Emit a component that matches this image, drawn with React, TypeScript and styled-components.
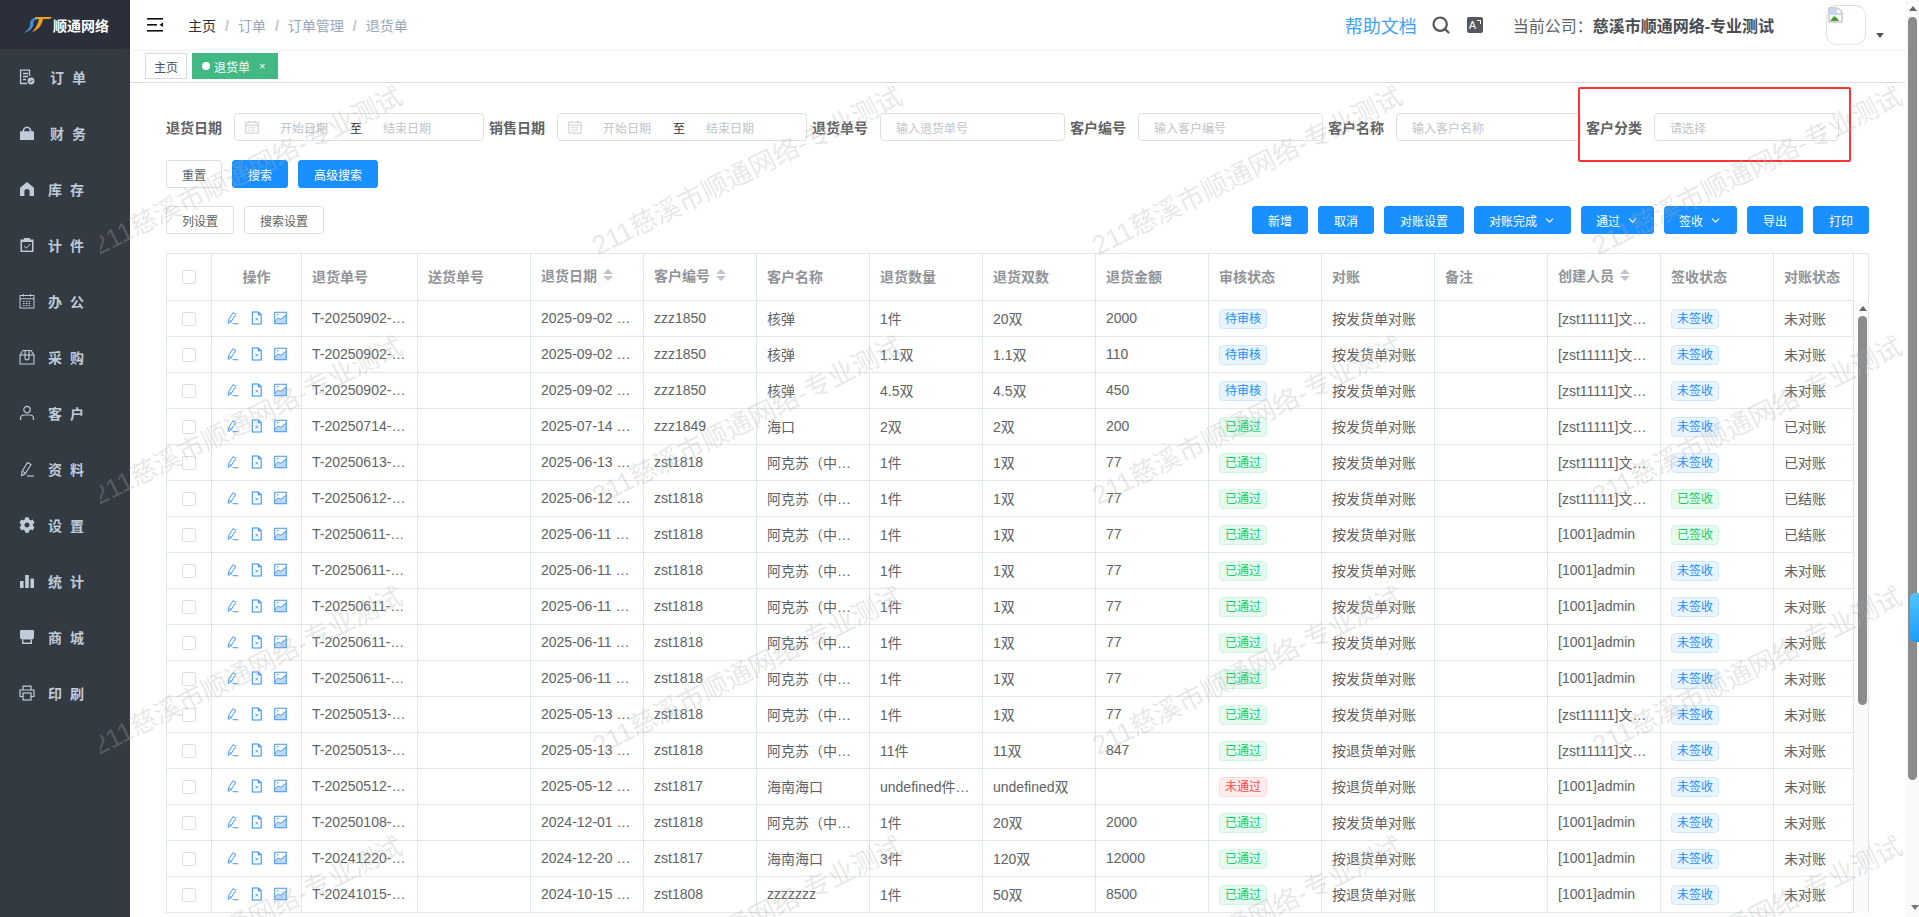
import React from "react";
import styled, { createGlobalStyle } from "styled-components";
import { ChevronDown, Search } from "lucide-react";
import { FaCog } from "react-icons/fa";

const GlobalStyle = createGlobalStyle`
  html, body { margin: 0; padding: 0; height: 100%; overflow: hidden; }
  body {
    font-family: "Liberation Sans", "Noto Sans CJK SC", sans-serif;
    font-size: 14px;
    color: #606266;
    background: #fff;
  }
  * { box-sizing: border-box; }
`;

const Shell = styled.div`
  display: flex;
  width: 1919px;
  height: 917px;
  overflow: hidden;
  position: relative;
`;

/* sidebar */
const Sidebar = styled.aside`
  width: 130px;
  flex: none;
  background: #333a42;
`;
const Logo = styled.div`
  height: 49px;
  background: #2b2f3a;
  display: flex;
  align-items: center;
  padding-left: 22px;
  gap: 1px;
  color: #fff;
  font-weight: bold;
  font-size: 14px;
`;
const MenuItem = styled.div`
  height: 56px;
  display: flex;
  align-items: center;
  padding-left: 19px;
  color: #bfcbd9;
  svg { width: 16px; height: 16px; flex: none; display: block; }
`;
const MenuLabel = styled.span<{ $shift?: boolean }>`
  margin-left: ${(p) => (p.$shift ? 15 : 13)}px;
  font-weight: bold;
  letter-spacing: 8px;
  white-space: nowrap;
`;

/* main column */
const Main = styled.main`
  flex: 1;
  min-width: 0;
  display: flex;
  flex-direction: column;
`;
const TopBar = styled.header`
  height: 49px;
  flex: none;
  display: flex;
  align-items: center;
  background: #fff;
  box-shadow: 0 1px 4px rgba(0, 21, 41, 0.08);
  padding: 0 21px 0 17px;
  position: relative;
`;
const Crumbs = styled.nav`
  display: flex;
  align-items: center;
  margin-left: 25px;
  color: #97a8be;
  span + span::before {
    content: "/";
    color: #c0c4cc;
    margin: 0 9px;
    font-weight: bold;
  }
  span:first-child { color: #303133; }
`;
const Spacer = styled.div`
  flex: 1;
`;
const HelpLink = styled.a`
  font-size: 18px;
  color: #409eff;
  margin-right: 14px;
`;
const FontBadge = styled.span`
  width: 16px;
  height: 16px;
  margin: 0 30px 0 16px;
  background: #55585f;
  border-radius: 2px;
  color: #fff;
  font-size: 11px;
  line-height: 16px;
  padding-left: 2px;
  display: block;
  position: relative;
  &::after {
    content: "";
    position: absolute;
    right: 2px;
    top: 3px;
    width: 3px;
    height: 3px;
    border-top: 1px solid #fff;
    border-right: 1px solid #fff;
  }
`;
const Company = styled.div`
  font-size: 16px;
  color: #606266;
  white-space: nowrap;
  margin-right: 52px;
  b { color: #4a4d52; }
`;
const Avatar = styled.div`
  width: 40px;
  height: 40px;
  border-radius: 10px;
  border: 1px solid #e4e4e4;
  border-top-color: #ddd;
  margin-right: 10px;
  svg { display: block; width: 16px; height: 16px; margin: 1px 0 0 1px; }
`;
const Caret = styled.i`
  width: 0;
  height: 0;
  border-left: 4px solid transparent;
  border-right: 4px solid transparent;
  border-top: 5px solid #555;
  margin-top: 22px;
`;

const TagsBar = styled.div`
  height: 34px;
  flex: none;
  display: flex;
  gap: 5px;
  padding: 4px 0 0 15px;
  border-bottom: 1px solid #d8dce5;
`;
const Tag = styled.div<{ $active?: boolean }>`
  height: 26px;
  display: flex;
  align-items: center;
  font-size: 12px;
  padding: 0 ${(p) => (p.$active ? "12px 0 9px" : "8px")};
  color: ${(p) => (p.$active ? "#fff" : "#495060")};
  background: ${(p) => (p.$active ? "#42b983" : "#fff")};
  border: 1px solid ${(p) => (p.$active ? "#42b983" : "#d8dce5")};
`;
const TagDot = styled.i`
  width: 8px;
  height: 8px;
  border-radius: 50%;
  background: #fff;
  margin-right: 4px;
`;
const TagClose = styled.span`
  font-size: 11px;
  margin-left: 9px;
`;

/* filter form */
const Content = styled.section`
  flex: 1;
  min-height: 0;
  padding: 30px 0 0 36px;
  position: relative;
`;
const FilterRow = styled.div`
  display: flex;
  gap: 5px;
  height: 28px;
`;
const Field = styled.label`
  display: flex;
  align-items: center;
  gap: 12px;
`;
const FieldLabel = styled.span`
  font-weight: bold;
  color: #606266;
  white-space: nowrap;
`;
const Box = styled.div<{ $width: number }>`
  width: ${(p) => p.$width}px;
  height: 28px;
  display: flex;
  align-items: center;
  border: 1px solid #dcdfe6;
  border-radius: 4px;
  font-size: 12px;
  color: #c0c4cc;
  background: transparent;
`;
const InputText = styled.span`
  padding-left: 15px;
  flex: 1;
`;
const DateIcon = styled.span`
  margin-left: 10px;
  display: block;
  svg { display: block; width: 14px; height: 14px; }
`;
const DatePart = styled.span`
  width: 48px;
  margin-left: 21px;
  white-space: nowrap;
`;
const DateSep = styled.span`
  margin-left: 22px;
  color: #303133;
`;
const SelectArrow = styled.span`
  margin-right: 9px;
  display: block;
  svg { display: block; }
`;
const Annotation = styled.div`
  position: absolute;
  left: 1448px;
  top: 4px;
  width: 273px;
  height: 75px;
  border: 2px solid #f33;
  border-radius: 2px;
  pointer-events: none;
`;

const ButtonRow = styled.div<{ $top: number }>`
  display: flex;
  justify-content: space-between;
  margin-top: ${(p) => p.$top}px;
  padding-right: 36px;
`;
const ButtonGroup = styled.div`
  display: flex;
  gap: 10px;
`;
const Button = styled.button<{ $primary?: boolean; $width: number }>`
  width: ${(p) => p.$width}px;
  height: 28px;
  padding: 0;
  display: flex;
  align-items: center;
  justify-content: center;
  gap: 6px;
  font: inherit;
  font-size: 12px;
  border-radius: 3px;
  border: 1px solid ${(p) => (p.$primary ? "#1890ff" : "#dcdfe6")};
  background: ${(p) => (p.$primary ? "#1890ff" : "#fff")};
  color: ${(p) => (p.$primary ? "#fff" : "#606266")};
`;

/* table */
const TableWrap = styled.div`
  display: flex;
  width: 1703px;
  margin-top: 19px;
  border-left: 1px solid #dfe6ec;
  border-right: 1px solid #dfe6ec;
  border-top: 1px solid #dfe6ec;
`;
const Table = styled.table`
  width: 1686px;
  flex: none;
  table-layout: fixed;
  border-collapse: separate;
  border-spacing: 0;
`;
const Th = styled.th<{ $center?: boolean }>`
  height: 47px;
  padding: 0 10px 2px;
  font-weight: bold;
  color: #909399;
  text-align: ${(p) => (p.$center ? "center" : "left")};
  border-right: 1px solid #dfe6ec;
  border-bottom: 1px solid #dfe6ec;
  white-space: nowrap;
`;
const Td = styled.td<{ $center?: boolean }>`
  height: 36px;
  padding: 0 10px 2px;
  text-align: ${(p) => (p.$center ? "center" : "left")};
  border-right: 1px solid #dfe6ec;
  border-bottom: 1px solid #dfe6ec;
  white-space: nowrap;
  overflow: hidden;
  text-overflow: ellipsis;
  vertical-align: middle;
`;
const HeadInner = styled.span`
  display: inline-flex;
  align-items: center;
  gap: 6px;
  position: relative;
  top: -1px;
`;
const Sort = styled.i`
  display: inline-flex;
  flex-direction: column;
  gap: 2px;
  &::before, &::after {
    content: "";
    width: 0;
    height: 0;
    border-left: 5px solid transparent;
    border-right: 5px solid transparent;
  }
  &::before { border-bottom: 5px solid #c0c4cc; }
  &::after { border-top: 5px solid #c0c4cc; }
`;
const Check = styled.span`
  display: inline-block;
  width: 14px;
  height: 14px;
  border: 1px solid #dcdfe6;
  border-radius: 2px;
  vertical-align: middle;
`;
const Ops = styled.div`
  display: flex;
  justify-content: center;
  align-items: center;
  gap: 11px;
  color: #2f8cf7;
  svg { display: block; width: 13px; height: 14px; flex: none; }
`;
const Status = styled.span<{ $kind: "blue" | "green" | "red" }>`
  display: inline-block;
  height: 20px;
  line-height: 18px;
  padding: 0 5px;
  font-size: 12px;
  border-radius: 4px;
  border: 1px solid ${(p) => ({ blue: "#d1e9ff", green: "#d0f5e0", red: "#ffdbdb" })[p.$kind]};
  background: ${(p) => ({ blue: "#e8f4ff", green: "#e7faf0", red: "#ffeded" })[p.$kind]};
  color: ${(p) => ({ blue: "#1890ff", green: "#13ce66", red: "#ff4949" })[p.$kind]};
  vertical-align: middle;
  margin-top: 2px;
`;

/* drawn scrollbars */
const ScrollGutter = styled.div`
  flex: 1;
  background: linear-gradient(#fff 47px, #fafafa 47px);
  padding: 52px 0 0 4px;
`;
const ArrowUp = styled.i`
  display: block;
  width: 0;
  height: 0;
  border-left: 4px solid transparent;
  border-right: 4px solid transparent;
  border-bottom: 5px solid #666;
  margin-left: 1px;
`;
const ArrowDown = styled.i`
  display: block;
  width: 0;
  height: 0;
  border-left: 4px solid transparent;
  border-right: 4px solid transparent;
  border-top: 5px solid #777;
  margin-left: 3px;
`;
const TableThumb = styled.div`
  width: 9px;
  height: 389px;
  margin-top: 5px;
  border-radius: 5px;
  background: #8b8b8b;
`;
const PageScroll = styled.div`
  width: 14px;
  flex: none;
  height: 917px;
  background: #fafafa;
  padding: 6px 0 0 3px;
  display: flex;
  flex-direction: column;
  position: relative;
`;
const PageThumb = styled.div`
  width: 9px;
  height: 763px;
  margin-top: 6px;
  border-radius: 5px;
  background: #8b8b8b;
`;
const PageArrowGap = styled.div`
  margin-top: 125px;
`;
const FloatHandle = styled.div`
  position: absolute;
  right: 0;
  top: 593px;
  width: 9px;
  height: 49px;
  border-radius: 5px 0 0 5px;
  background: linear-gradient(#52c4ff, #1a9dfb);
`;

/* watermark */
const Watermark = styled.div`
  position: absolute;
  left: 100px;
  top: 9px;
  right: 0;
  bottom: 0;
  pointer-events: none;
  display: grid;
  grid-template-columns: repeat(4, 500px);
  grid-auto-rows: 250px;
  overflow: hidden;
  z-index: 5;
`;
const Mark = styled.div`
  display: flex;
  align-items: flex-end;
  span {
    display: block;
    line-height: 1;
    font-size: 26.5px;
    white-space: nowrap;
    color: rgba(175, 175, 175, 0.3);
    transform: rotate(-26.5deg);
    transform-origin: 0 100%;
  }
`;

/* icons */
const LogoMark = () => (
  <svg width="30" height="17" viewBox="0 0 30 17">
    <path d="M1 17C5 15 8 12 8 8C8 4 11 1 17 1L15 3.5C12 3.5 11.5 5 11.5 8C11.5 12 7 16 1 17Z" fill="#3d8fd1" />
    <path d="M13 1H30L28 3H21C20 8 17 14 10 16C14 12 16 8 17 3H13Z" fill="#f0a020" />
  </svg>
);
const Hamburger = () => (
  <svg width="16" height="16" viewBox="0 0 16 16" fill="#111">
    <rect x="0" y="1" width="16" height="1.6" />
    <rect x="0" y="7" width="10" height="1.6" />
    <rect x="0" y="13" width="16" height="1.6" />
    <path d="M16 5.5V10L12.5 7.8Z" />
  </svg>
);
const PenIcon = () => (
  <svg viewBox="0 0 16 16" fill="none" stroke="currentColor" strokeWidth="1.1">
    <path d="M3 10.5L8.5 1.5L12 3.5L6 13L2.6 14.6Z" />
    <path d="M4 10.5L6.8 12.4" />
    <path d="M8 15H15" />
  </svg>
);
const FileIcon = () => (
  <svg viewBox="0 0 13 15" fill="none" stroke="currentColor" strokeWidth="1.1">
    <path d="M2 1H8.5L11.5 4V14H2Z" />
    <path d="M8.5 1V4H11.5" />
    <path d="M5.2 7.2L8.2 10.2M8.2 7.2L5.2 10.2" strokeWidth="0.9" />
  </svg>
);
const ImageIcon = () => (
  <svg viewBox="0 0 14 14" fill="none" stroke="currentColor" strokeWidth="1">
    <path d="M1 11L4.5 7.5L7 9L13 4V13H1Z" fill="#bcd8fb" stroke="none" />
    <rect x="0.8" y="0.8" width="12.4" height="12.4" />
    <path d="M1 10.5L4.5 7L7 8.5L13 4" />
    <circle cx="4" cy="3.6" r="0.8" fill="currentColor" stroke="none" />
  </svg>
);
const CalendarIcon = () => (
  <svg viewBox="0 0 16 16" fill="none" stroke="currentColor" strokeWidth="1">
    <rect x="1" y="2.5" width="14" height="12.5" />
    <path d="M1 5.8H15M4.5 1V3.5M11.5 1V3.5" />
    <path d="M4 8.5H12M4 10.5H12M4 12.5H12" strokeDasharray="1.6 1.2" />
  </svg>
);
const OrderIcon = () => (
  <svg viewBox="0 0 16 16" fill="none" stroke="currentColor" strokeWidth="1.3">
    <path d="M8 14.5H1.6V1.2H10.5V7" />
    <path d="M4 4.5H9M4 7.5H9M4 10.5H7" strokeWidth="1.5" />
    <circle cx="12" cy="12" r="3.4" fill="currentColor" stroke="none" />
    <path d="M10.6 12.2L11.7 13.2L13.5 11" stroke="#333a42" strokeWidth="1" />
  </svg>
);
const LockIcon = () => (
  <svg viewBox="0 0 16 16" fill="currentColor">
    <path d="M1 7.2C1 6.6 1.4 6.2 2 6.2H3.4C3.6 3.6 5.4 1.4 8 1.4C10.6 1.4 12.4 3.6 12.6 6.2H14C14.6 6.2 15 6.6 15 7.2V15H1ZM5 6.2H11C10.8 4.4 9.8 2.9 8 2.9C6.2 2.9 5.2 4.4 5 6.2Z" />
  </svg>
);
const HomeIcon = () => (
  <svg viewBox="0 0 16 16" fill="currentColor">
    <path d="M8 1L15 6.8V15H10.6V10.2C10.6 9 9.5 8 8 8C6.5 8 5.4 9 5.4 10.2V15H1V6.8Z" />
  </svg>
);
const ClipIcon = () => (
  <svg viewBox="0 0 16 16" fill="none">
    <path d="M1.5 2.6H5V1H11V2.6H14.5V15H1.5Z" fill="currentColor" />
    <rect x="3" y="5" width="10" height="8.6" fill="#333a42" />
    <path d="M5 9L7.4 11.2L11.2 7" stroke="currentColor" strokeWidth="1" />
  </svg>
);
const BoxIcon = () => (
  <svg viewBox="0 0 16 16" fill="none" stroke="currentColor" strokeWidth="1.1">
    <path d="M1 15V6L4 1.5H12L15 6V15Z" />
    <path d="M1 6H15" />
    <path d="M6 1.5V9C6 11.5 10 11.5 10 9V1.5" />
  </svg>
);
const UserIcon = () => (
  <svg viewBox="0 0 16 16" fill="none" stroke="currentColor" strokeWidth="1.2">
    <circle cx="8" cy="4.6" r="3.2" />
    <path d="M1.6 15V13C1.6 10.8 3.6 10 5.2 10H10.8C12.4 10 14.4 10.8 14.4 13V15" />
  </svg>
);
const BarsIcon = () => (
  <svg viewBox="0 0 16 16" fill="currentColor">
    <rect x="1" y="8" width="3.6" height="7" />
    <rect x="6.2" y="2" width="3.6" height="13" />
    <rect x="11.4" y="5.6" width="3.6" height="9.4" />
  </svg>
);
const ShopIcon = () => (
  <svg viewBox="0 0 16 16" fill="currentColor">
    <path d="M2.4 1H13.6C14.4 1 15 1.6 15 2.4V8.6C15 9.6 14 10.4 13 10.4H3C2 10.4 1 9.6 1 8.6V2.4C1 1.6 1.6 1 2.4 1Z" />
    <path d="M3 10.4V15H13V10.4H11.6V13.4H4.4V10.4Z" />
  </svg>
);
const PrinterIcon = () => (
  <svg viewBox="0 0 16 16" fill="none" stroke="currentColor" strokeWidth="1.2">
    <path d="M4 5V1.2H12V5" />
    <path d="M4 11.5H1V5H15V11.5H12" />
    <rect x="4" y="8" width="8" height="7" />
  </svg>
);
const BrokenImage = () => (
  <svg viewBox="0 0 16 16">
    <path d="M1 1H10L14 5V15H1Z" fill="#fff" stroke="#aaa" />
    <path d="M2 2H9V6H13V8L2 8Z" fill="#c4d8f4" />
    <path d="M2 14L6 9L9 11L11 14Z" fill="#4f9a3c" />
  </svg>
);

const menus = [
  { icon: <OrderIcon />, label: "订单", shift: true },
  { icon: <LockIcon />, label: "财务", shift: true },
  { icon: <HomeIcon />, label: "库存" },
  { icon: <ClipIcon />, label: "计件" },
  { icon: <CalendarIcon />, label: "办公" },
  { icon: <BoxIcon />, label: "采购" },
  { icon: <UserIcon />, label: "客户" },
  { icon: <PenIcon />, label: "资料" },
  { icon: <FaCog />, label: "设置" },
  { icon: <BarsIcon />, label: "统计" },
  { icon: <ShopIcon />, label: "商城" },
  { icon: <PrinterIcon />, label: "印刷" },
];

const widths = [45, 90, 116, 113, 113, 113, 113, 113, 113, 113, 113, 113, 113, 113, 113, 80];

const heads: { text: string; sort?: boolean; center?: boolean }[] = [
  { text: "操作", center: true },
  { text: "退货单号" },
  { text: "送货单号" },
  { text: "退货日期", sort: true },
  { text: "客户编号", sort: true },
  { text: "客户名称" },
  { text: "退货数量" },
  { text: "退货双数" },
  { text: "退货金额" },
  { text: "审核状态" },
  { text: "对账" },
  { text: "备注" },
  { text: "创建人员", sort: true },
  { text: "签收状态" },
  { text: "对账状态" },
];

type Row = {
  no: string;
  date: string;
  code: string;
  name: string;
  qty: string;
  pairs: string;
  amount: string;
  audit: string;
  mode: string;
  user: string;
  sign: string;
  bill: string;
};

const AKS = "阿克苏（中国）有限公司";
const STAFF = "[zst11111]文员小张";
const ADMIN = "[1001]admin";
const BYSEND = "按发货单对账";
const BYBACK = "按退货单对账";

const rows: Row[] = [
  { no: "T-20250902-0003", date: "2025-09-02 10:21:08", code: "zzz1850", name: "核弹", qty: "1件", pairs: "20双", amount: "2000", audit: "待审核", mode: BYSEND, user: STAFF, sign: "未签收", bill: "未对账" },
  { no: "T-20250902-0002", date: "2025-09-02 10:15:40", code: "zzz1850", name: "核弹", qty: "1.1双", pairs: "1.1双", amount: "110", audit: "待审核", mode: BYSEND, user: STAFF, sign: "未签收", bill: "未对账" },
  { no: "T-20250902-0001", date: "2025-09-02 10:02:17", code: "zzz1850", name: "核弹", qty: "4.5双", pairs: "4.5双", amount: "450", audit: "待审核", mode: BYSEND, user: STAFF, sign: "未签收", bill: "未对账" },
  { no: "T-20250714-0001", date: "2025-07-14 16:30:12", code: "zzz1849", name: "海口", qty: "2双", pairs: "2双", amount: "200", audit: "已通过", mode: BYSEND, user: STAFF, sign: "未签收", bill: "已对账" },
  { no: "T-20250613-0001", date: "2025-06-13 09:12:45", code: "zst1818", name: AKS, qty: "1件", pairs: "1双", amount: "77", audit: "已通过", mode: BYSEND, user: STAFF, sign: "未签收", bill: "已对账" },
  { no: "T-20250612-0001", date: "2025-06-12 14:05:33", code: "zst1818", name: AKS, qty: "1件", pairs: "1双", amount: "77", audit: "已通过", mode: BYSEND, user: STAFF, sign: "已签收", bill: "已结账" },
  { no: "T-20250611-0005", date: "2025-06-11 17:40:02", code: "zst1818", name: AKS, qty: "1件", pairs: "1双", amount: "77", audit: "已通过", mode: BYSEND, user: ADMIN, sign: "已签收", bill: "已结账" },
  { no: "T-20250611-0004", date: "2025-06-11 17:38:21", code: "zst1818", name: AKS, qty: "1件", pairs: "1双", amount: "77", audit: "已通过", mode: BYSEND, user: ADMIN, sign: "未签收", bill: "未对账" },
  { no: "T-20250611-0003", date: "2025-06-11 17:36:50", code: "zst1818", name: AKS, qty: "1件", pairs: "1双", amount: "77", audit: "已通过", mode: BYSEND, user: ADMIN, sign: "未签收", bill: "未对账" },
  { no: "T-20250611-0002", date: "2025-06-11 17:30:11", code: "zst1818", name: AKS, qty: "1件", pairs: "1双", amount: "77", audit: "已通过", mode: BYSEND, user: ADMIN, sign: "未签收", bill: "未对账" },
  { no: "T-20250611-0001", date: "2025-06-11 17:22:47", code: "zst1818", name: AKS, qty: "1件", pairs: "1双", amount: "77", audit: "已通过", mode: BYSEND, user: ADMIN, sign: "未签收", bill: "未对账" },
  { no: "T-20250513-0002", date: "2025-05-13 11:18:09", code: "zst1818", name: AKS, qty: "1件", pairs: "1双", amount: "77", audit: "已通过", mode: BYSEND, user: STAFF, sign: "未签收", bill: "未对账" },
  { no: "T-20250513-0001", date: "2025-05-13 10:47:26", code: "zst1818", name: AKS, qty: "11件", pairs: "11双", amount: "847", audit: "已通过", mode: BYBACK, user: STAFF, sign: "未签收", bill: "未对账" },
  { no: "T-20250512-0001", date: "2025-05-12 15:33:58", code: "zst1817", name: "海南海口", qty: "undefined件undefined双", pairs: "undefined双", amount: "", audit: "未通过", mode: BYBACK, user: ADMIN, sign: "未签收", bill: "未对账" },
  { no: "T-20250108-0001", date: "2024-12-01 08:56:14", code: "zst1818", name: AKS, qty: "1件", pairs: "20双", amount: "2000", audit: "已通过", mode: BYSEND, user: ADMIN, sign: "未签收", bill: "未对账" },
  { no: "T-20241220-0001", date: "2024-12-20 13:09:37", code: "zst1817", name: "海南海口", qty: "3件", pairs: "120双", amount: "12000", audit: "已通过", mode: BYBACK, user: ADMIN, sign: "未签收", bill: "未对账" },
  { no: "T-20241015-0001", date: "2024-10-15 09:41:20", code: "zst1808", name: "zzzzzzz", qty: "1件", pairs: "50双", amount: "8500", audit: "已通过", mode: BYBACK, user: ADMIN, sign: "未签收", bill: "未对账" },
];

const statusKind = (s: string): "blue" | "green" | "red" => {
  if (s === "已通过" || s === "已签收") return "green";
  if (s === "未通过") return "red";
  return "blue";
};

const DateRange = () => (
  <Box $width={250}>
    <DateIcon>
      <CalendarIcon />
    </DateIcon>
    <DatePart>开始日期</DatePart>
    <DateSep>至</DateSep>
    <DatePart>结束日期</DatePart>
  </Box>
);

export default function App() {
  return (
    <Shell>
      <GlobalStyle />
      <Sidebar>
        <Logo>
          <LogoMark />
          顺通网络
        </Logo>
        {menus.map((m) => (
          <MenuItem key={m.label}>
            {m.icon}
            <MenuLabel $shift={m.shift}>{m.label}</MenuLabel>
          </MenuItem>
        ))}
      </Sidebar>

      <Main>
        <TopBar>
          <Hamburger />
          <Crumbs>
            <span>主页</span>
            <span>订单</span>
            <span>订单管理</span>
            <span>退货单</span>
          </Crumbs>
          <Spacer />
          <HelpLink>帮助文档</HelpLink>
          <Search size={20} color="#555" strokeWidth={2.6} />
          <FontBadge>A</FontBadge>
          <Company>
            当前公司：<b>慈溪市顺通网络-专业测试</b>
          </Company>
          <Avatar>
            <BrokenImage />
          </Avatar>
          <Caret />
        </TopBar>

        <TagsBar>
          <Tag>主页</Tag>
          <Tag $active>
            <TagDot />
            退货单
            <TagClose>×</TagClose>
          </Tag>
        </TagsBar>

        <Content>
          <FilterRow>
            <Field>
              <FieldLabel>退货日期</FieldLabel>
              <DateRange />
            </Field>
            <Field>
              <FieldLabel>销售日期</FieldLabel>
              <DateRange />
            </Field>
            <Field>
              <FieldLabel>退货单号</FieldLabel>
              <Box $width={185}>
                <InputText>输入退货单号</InputText>
              </Box>
            </Field>
            <Field>
              <FieldLabel>客户编号</FieldLabel>
              <Box $width={185}>
                <InputText>输入客户编号</InputText>
              </Box>
            </Field>
            <Field>
              <FieldLabel>客户名称</FieldLabel>
              <Box $width={185}>
                <InputText>输入客户名称</InputText>
              </Box>
            </Field>
            <Field>
              <FieldLabel>客户分类</FieldLabel>
              <Box $width={185}>
                <InputText>请选择</InputText>
                <SelectArrow>
                  <ChevronDown size={15} strokeWidth={1.2} />
                </SelectArrow>
              </Box>
            </Field>
          </FilterRow>
          <Annotation />

          <ButtonRow $top={19}>
            <ButtonGroup>
              <Button $width={56}>重置</Button>
              <Button $width={56} $primary>搜索</Button>
              <Button $width={80} $primary>高级搜索</Button>
            </ButtonGroup>
          </ButtonRow>

          <ButtonRow $top={18}>
            <ButtonGroup>
              <Button $width={68}>列设置</Button>
              <Button $width={80}>搜索设置</Button>
            </ButtonGroup>
            <ButtonGroup>
              <Button $width={56} $primary>新增</Button>
              <Button $width={56} $primary>取消</Button>
              <Button $width={80} $primary>对账设置</Button>
              <Button $width={97} $primary>对账完成<ChevronDown size={13} /></Button>
              <Button $width={73} $primary>通过<ChevronDown size={13} /></Button>
              <Button $width={73} $primary>签收<ChevronDown size={13} /></Button>
              <Button $width={56} $primary>导出</Button>
              <Button $width={56} $primary>打印</Button>
            </ButtonGroup>
          </ButtonRow>

          <TableWrap>
            <Table>
              <colgroup>
                {widths.map((w, i) => (
                  <col key={i} width={w} />
                ))}
              </colgroup>
              <thead>
                <tr>
                  <Th $center>
                    <Check />
                  </Th>
                  {heads.map((h) => (
                    <Th key={h.text} $center={h.center}>
                      {h.sort ? (
                        <HeadInner>
                          {h.text}
                          <Sort />
                        </HeadInner>
                      ) : (
                        h.text
                      )}
                    </Th>
                  ))}
                </tr>
              </thead>
              <tbody>
                {rows.map((r) => (
                  <tr key={r.no}>
                    <Td $center>
                      <Check />
                    </Td>
                    <Td>
                      <Ops>
                        <PenIcon />
                        <FileIcon />
                        <ImageIcon />
                      </Ops>
                    </Td>
                    <Td>{r.no}</Td>
                    <Td></Td>
                    <Td>{r.date}</Td>
                    <Td>{r.code}</Td>
                    <Td>{r.name}</Td>
                    <Td>{r.qty}</Td>
                    <Td>{r.pairs}</Td>
                    <Td>{r.amount}</Td>
                    <Td>
                      <Status $kind={statusKind(r.audit)}>{r.audit}</Status>
                    </Td>
                    <Td>{r.mode}</Td>
                    <Td></Td>
                    <Td>{r.user}</Td>
                    <Td>
                      <Status $kind={statusKind(r.sign)}>{r.sign}</Status>
                    </Td>
                    <Td>{r.bill}</Td>
                  </tr>
                ))}
              </tbody>
            </Table>
            <ScrollGutter>
              <ArrowUp />
              <TableThumb />
            </ScrollGutter>
          </TableWrap>
        </Content>
      </Main>

      <PageScroll>
        <ArrowUp />
        <PageThumb />
        <PageArrowGap>
          <ArrowDown />
        </PageArrowGap>
        <FloatHandle />
      </PageScroll>

      <Watermark>
        {Array.from({ length: 16 }).map((_, i) => (
          <Mark key={i}>
            <span>211慈溪市顺通网络-专业测试</span>
          </Mark>
        ))}
      </Watermark>
    </Shell>
  );
}
